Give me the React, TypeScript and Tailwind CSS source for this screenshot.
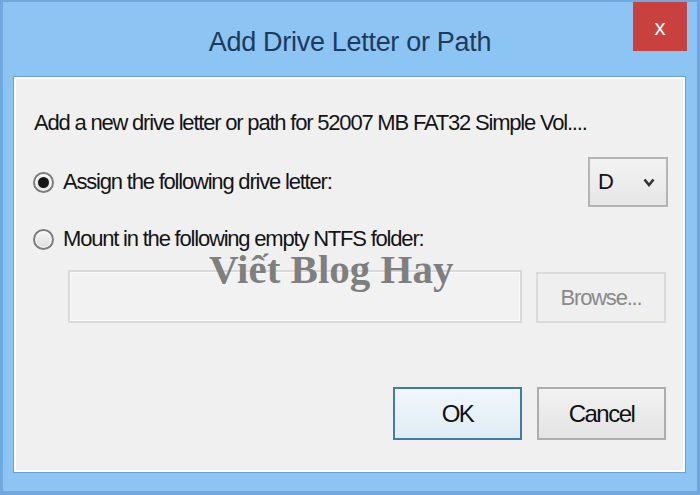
import React from "react";

function Radio({ checked }: { checked?: boolean }) {
  return (
    <div className="w-[21px] h-[21px] rounded-full border-[2px] border-[#7c7c7c] bg-gradient-to-b from-[#f6f6f6] to-[#dedede] flex items-center justify-center shrink-0 shadow-[inset_0_0_0_1px_#ffffff]">
      {checked && <div className="w-[11px] h-[11px] rounded-full bg-[#161616]" />}
    </div>
  );
}

export default function App() {
  const font = { fontFamily: '"Liberation Sans", Arial, sans-serif' };
  return (
    <div
      className="w-[700px] h-[495px] bg-[#8cc4f3] border-l-[3px] border-t-[2px] border-r-[3px] border-b-[4px] border-[#6ea8dc] flex flex-col relative overflow-hidden"
      style={font}
    >
      {/* Title bar */}
      <div className="h-[75px] grid grid-cols-[1fr_auto_1fr] items-start">
        <div />
        <div className="pt-[24px] text-[27px] leading-[32px] tracking-[-0.3px] text-[#1f3a5c]">
          Add Drive Letter or Path
        </div>
        <div className="flex justify-end pr-[10px]">
          <div className="w-[54px] h-[51px] bg-[#c8413f] flex items-center justify-center text-white text-[22px] leading-none -mt-[2px] pt-[4px]">
            x
          </div>
        </div>
      </div>

      {/* Content */}
      <div className="ml-[11px] mr-[12px] h-[395px] border-[2px] border-white bg-[#f0f0f0] shadow-[0_0_0_1px_#6b9fd0] pl-[18px] pr-[17px] flex flex-col text-[22px] leading-[24px] tracking-[-1.2px] text-[#141414]">
        <div className="mt-[32px]">Add a new drive letter or path for 52007 MB FAT32 Simple Vol....</div>

        <div className="mt-[22px] h-[50px] flex items-center justify-between">
          <div className="flex items-center gap-[9px] -ml-[1px]">
            <Radio checked />
            <span>Assign the following drive letter:</span>
          </div>
          <div className="w-[80px] h-[50px] -mr-[2px] border-[2px] border-[#b4b4b4] bg-gradient-to-b from-[#f3f3f3] to-[#e6e6e6] flex items-center justify-between pl-[8px] pr-[11px]">
            <span className="tracking-normal">D</span>
            <svg width="12" height="9" viewBox="0 0 12 9">
              <path d="M1.5 1.5 L6 7 L10.5 1.5" fill="none" stroke="#333" strokeWidth="2.6" strokeLinejoin="miter" />
            </svg>
          </div>
        </div>

        <div className="mt-[20px] flex items-center gap-[9px] -ml-[1px]">
          <Radio />
          <span>Mount in the following empty NTFS folder:</span>
        </div>

        <div className="mt-[19px] ml-[34px] flex items-end gap-[14px]">
          <div className="flex-1 h-[53px] border-[2px] border-[#d9d9d9] bg-[#f2f2f2] shadow-[inset_0_0_0_1px_#fafafa]" />
          <div className="w-[130px] h-[51px] border-[2px] border-[#dadada] bg-[#efefef] flex items-center justify-center text-[#8a8a8a]">
            Browse...
          </div>
        </div>

        <div className="mt-[64px] flex justify-end gap-[15px]">
          <div className="w-[129px] h-[53px] border-[2px] border-[#3f7cab] bg-gradient-to-b from-[#f1f7fb] to-[#dfecf5] flex items-center justify-center text-[24px] tracking-[-1.5px] text-[#111]">
            OK
          </div>
          <div className="w-[129px] h-[53px] border-[2px] border-[#adadad] bg-gradient-to-b from-[#f2f2f2] to-[#e3e3e3] flex items-center justify-center text-[24px] tracking-[-1.5px] text-[#111]">
            Cancel
          </div>
        </div>
      </div>

      {/* Watermark */}
      <div
        className="absolute left-[206px] top-[247px] text-[41px] leading-[41px] font-bold text-[#7f7f7f] pointer-events-none"
        style={{ fontFamily: '"Liberation Serif", "Times New Roman", serif' }}
      >
        Viết Blog Hay
      </div>
    </div>
  );
}
